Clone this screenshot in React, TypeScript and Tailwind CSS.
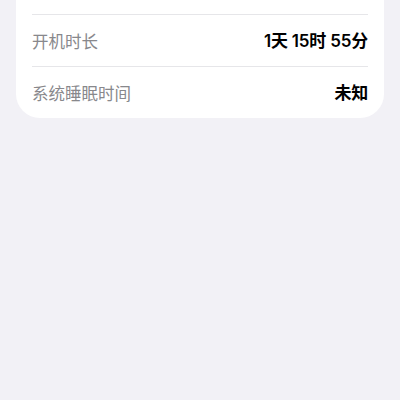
export default function App() {
  const rows = [
    { label: "", value: "" },
    { label: "开机时长", value: "1天 15时 55分" },
    { label: "系统睡眠时间", value: "未知" },
  ];
  return (
    <div
      className="w-[400px] h-[400px] bg-[#f2f1f6] overflow-hidden"
      style={{ fontFamily: '"Inter", "Noto Sans CJK SC", sans-serif' }}
    >
      <div className="mx-4 -mt-[37px] bg-white rounded-[24px] px-4">
        {rows.map((r, i) => (
          <div
            key={i}
            className={`pt-[3px] flex items-center justify-between ${i < rows.length - 1 ? "h-[52px] border-b border-[#e6e6e9]" : "h-[51px]"}`}
          >
            <span className="text-[16.5px] text-[#88888c]">{r.label}</span>
            <span className="text-[17px] font-semibold text-black tracking-[-0.2px]">{r.value}</span>
          </div>
        ))}
      </div>
    </div>
  );
}
